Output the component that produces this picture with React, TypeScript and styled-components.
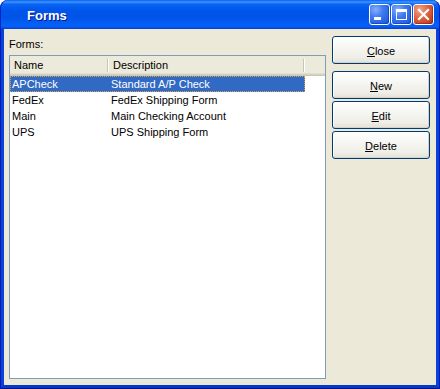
import React from "react";
import styled, { createGlobalStyle } from "styled-components";

const Global = createGlobalStyle`
  html, body { margin: 0; padding: 0; background: #ffffff; }
  body { width: 440px; height: 389px; overflow: hidden; }
`;

const Window = styled.div`
  width: 440px;
  height: 389px;
  display: flex;
  flex-direction: column;
  box-sizing: border-box;
  font-family: "Liberation Sans", Arial, sans-serif;
  font-size: 11px;
  color: #000;
`;

const TitleBar = styled.div`
  height: 29px;
  flex: none;
  display: flex;
  align-items: center;
  padding: 0 6px 0 27px;
  border-radius: 8px 8px 0 0;
  background: linear-gradient(
    to bottom,
    #0a5ff0 0%,
    #3d95ff 7%,
    #0a66f5 14%,
    #0055ea 35%,
    #0054e8 60%,
    #0560f5 85%,
    #0a5cf0 92%,
    #003ed8 100%
  );
  box-shadow: inset 1px 0 0 #0025c0, inset -1px 0 0 #0025c0;
`;

const Title = styled.div`
  flex: 1;
  color: #ffffff;
  font-family: "Liberation Sans", Arial, sans-serif;
  font-weight: bold;
  font-size: 13px;
  text-shadow: 1px 1px 0 #0a1883;
  padding-top: 1px;
`;

const CaptionButtons = styled.div`
  display: flex;
  gap: 1px;
  align-items: center;
`;

const CaptionButton = styled.div<{ $close?: boolean }>`
  width: 21px;
  height: 21px;
  box-sizing: border-box;
  border: 1px solid #ffffff;
  border-radius: 3px;
  display: flex;
  align-items: center;
  justify-content: center;
  background: ${(p) =>
    p.$close
      ? "radial-gradient(circle at 30% 25%, #f2a58a 0%, #e06a47 40%, #c6401e 80%, #b23414 100%)"
      : "radial-gradient(circle at 30% 25%, #88aefb 0%, #3e79f0 40%, #2360e4 80%, #1a50d2 100%)"};
  box-shadow: inset -1px -1px 0 rgba(0, 0, 40, 0.25);
`;

const Frame = styled.div`
  flex: 1;
  display: flex;
  box-sizing: border-box;
  border-left: 4px solid #0842d8;
  border-right: 4px solid #0842d8;
  border-bottom: 4px solid #0838c8;
  position: relative;
  background: #ece9d8;
  &::before {
    content: "";
    position: absolute;
    left: -4px;
    right: -4px;
    bottom: -4px;
    top: 0;
    pointer-events: none;
    box-shadow: inset 1px 0 0 #0019b0, inset -1px 0 0 #0019b0, inset 0 -1px 0 #00138a;
  }
`;

const Content = styled.div`
  flex: 1;
  display: grid;
  grid-template-columns: 1fr 98px;
  column-gap: 6px;
  padding: 0 6px 6px 5px;
  min-height: 0;
`;

const LeftColumn = styled.div`
  display: flex;
  flex-direction: column;
  min-height: 0;
`;

const Label = styled.div`
  height: 13px;
  line-height: 13px;
  margin-top: 9px;
  margin-bottom: 4px;
`;

const ListBox = styled.div`
  flex: 1;
  border: 1px solid #7f9db9;
  background: #ffffff;
  display: flex;
  flex-direction: column;
`;

const Header = styled.div`
  height: 20px;
  display: grid;
  grid-template-columns: 99px 196px 1fr;
  background: linear-gradient(
    to bottom,
    #ebeadb 0%,
    #ebeadb 85%,
    #e2decd 85%,
    #e2decd 90%,
    #d6d2c2 90%,
    #d6d2c2 95%,
    #cbc7b8 95%,
    #cbc7b8 100%
  );
`;

const HeaderCell = styled.div<{ $divider?: boolean }>`
  position: relative;
  padding-left: 4px;
  line-height: 18px;
  height: 18px;
  white-space: nowrap;
  overflow: hidden;
  &::after {
    content: "";
    display: ${(p) => (p.$divider ? "block" : "none")};
    position: absolute;
    right: 0;
    top: 3px;
    width: 2px;
    height: 13px;
    background: linear-gradient(to right, #c7c5b2 50%, #ffffff 50%);
  }
`;

const Row = styled.div<{ $selected?: boolean }>`
  height: 16px;
  display: grid;
  grid-template-columns: 99px 196px;
  width: 295px;
  box-sizing: border-box;
  color: ${(p) => (p.$selected ? "#ffffff" : "#000000")};
  background: ${(p) => (p.$selected ? "#316ac5" : "transparent")};
  outline: ${(p) => (p.$selected ? "1px dotted #e0a040" : "none")};
  outline-offset: -1px;
`;

const Cell = styled.div`
  padding-left: 2px;
  line-height: 16px;
  white-space: nowrap;
  overflow: hidden;
`;

const RightColumn = styled.div`
  display: flex;
  flex-direction: column;
  padding-top: 7px;
`;

const Button = styled.div<{ $gapAfter?: number }>`
  height: 28px;
  box-sizing: border-box;
  border: 1px solid #003c74;
  border-radius: 3px;
  background: linear-gradient(to bottom, #ffffff 0%, #f6f6f3 40%, #eeede6 80%, #e3e1d8 100%);
  box-shadow: inset -1px -1px 0 #d6d0c5, inset 1px 1px 0 #ffffff;
  display: flex;
  align-items: center;
  justify-content: center;
  margin-bottom: ${(p) => p.$gapAfter ?? 2}px;
  padding-top: 1px;
`;

const Key = styled.span`
  text-decoration: underline;
`;

const rows = [
  { name: "APCheck", desc: "Standard A/P Check" },
  { name: "FedEx", desc: "FedEx Shipping Form" },
  { name: "Main", desc: "Main Checking Account" },
  { name: "UPS", desc: "UPS Shipping Form" },
];

export default function App() {
  return (
    <Window>
      <Global />
      <TitleBar>
        <Title>Forms</Title>
        <CaptionButtons>
          <CaptionButton>
            <svg width="19" height="19" viewBox="0 0 19 19">
              <rect x="4" y="12" width="7" height="3" fill="#fff" />
            </svg>
          </CaptionButton>
          <CaptionButton>
            <svg width="19" height="19" viewBox="0 0 19 19">
              <rect x="4.5" y="4.5" width="10" height="10" fill="none" stroke="#fff" strokeWidth="1" />
              <rect x="4" y="4" width="11" height="3" fill="#fff" />
            </svg>
          </CaptionButton>
          <CaptionButton $close>
            <svg width="19" height="19" viewBox="0 0 19 19">
              <path d="M5 5 L14 14 M14 5 L5 14" stroke="#fff" strokeWidth="2.2" strokeLinecap="square" />
            </svg>
          </CaptionButton>
        </CaptionButtons>
      </TitleBar>
      <Frame>
        <Content>
          <LeftColumn>
            <Label>Forms:</Label>
            <ListBox>
              <Header>
                <HeaderCell $divider>Name</HeaderCell>
                <HeaderCell $divider>Description</HeaderCell>
                <HeaderCell />
              </Header>
              {rows.map((r, i) => (
                <Row key={r.name} $selected={i === 0}>
                  <Cell>{r.name}</Cell>
                  <Cell>{r.desc}</Cell>
                </Row>
              ))}
            </ListBox>
          </LeftColumn>
          <RightColumn>
            <Button $gapAfter={7}>
              <span><Key>C</Key>lose</span>
            </Button>
            <Button>
              <span><Key>N</Key>ew</span>
            </Button>
            <Button>
              <span><Key>E</Key>dit</span>
            </Button>
            <Button>
              <span><Key>D</Key>elete</span>
            </Button>
          </RightColumn>
        </Content>
      </Frame>
    </Window>
  );
}
